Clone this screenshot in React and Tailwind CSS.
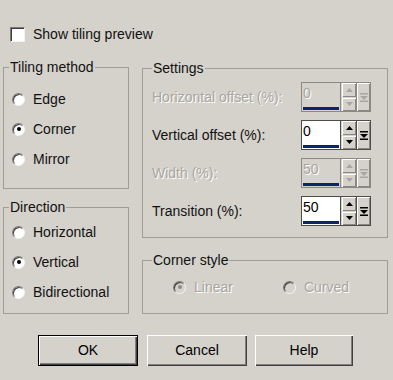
const dim = "text-[#a9a69f] [text-shadow:1px_1px_0_#ffffff]";

function Radio({ label, checked, disabled, className = "" }) {
  return (
    <div className={`flex h-[30px] items-center ${className}`}>
      <span
        className={`flex h-[13px] w-[13px] shrink-0 items-center justify-center rounded-full border border-t-[#7d7a74] border-l-[#7d7a74] border-r-[#f4f3f0] border-b-[#f4f3f0] shadow-[inset_1px_1px_0_#3f3d3a] ${
          disabled ? "bg-[#d5d2cb]" : "bg-white"
        }`}
      >
        {checked && (
          <span className={`h-[4px] w-[4px] rounded-full ${disabled ? "bg-[#8f8c86]" : "bg-black"}`} />
        )}
      </span>
      <span className={`ml-[8px] leading-none ${disabled ? dim : ""}`}>{label}</span>
    </div>
  );
}

function Group({ title, className, children }) {
  return (
    <fieldset className={`border border-[#a09d96] ${className}`}>
      <legend className="px-[1px] leading-[16px]">{title}</legend>
      {children}
    </fieldset>
  );
}

function Spin({ value, disabled }) {
  const frame = disabled ? "border-[#8c8983] bg-[#8c8983]" : "border-[#4e4c48] bg-[#4e4c48]";
  const arrow = disabled ? "#a9a69f" : "#000000";
  const btn =
    "flex items-center justify-center bg-[#d5d2cb] shadow-[inset_1px_1px_0_#ffffff,inset_-1px_-1px_0_#8a8780]";
  return (
    <div className={`flex h-[30px] w-[70px] gap-[1px] border ${frame}`}>
      <div className={`flex w-[38px] flex-col ${disabled ? "bg-[#d5d2cb]" : "bg-white"}`}>
        <span className={`flex-1 pl-[1px] pt-[1px] leading-[18px] ${disabled ? dim : "text-black"}`}>{value}</span>
        <span className="mx-[1px] mb-[1px] h-[3px] bg-[#0b2470]" />
      </div>
      <div className="flex w-[15px] flex-col gap-[1px] bg-[#d5d2cb] pl-[1px]">
        <span className={`${btn} flex-1`}>
          <svg width="7" height="4" viewBox="0 0 7 4">
            <path d="M3.5 0 L7 4 L0 4 Z" fill={arrow} />
          </svg>
        </span>
        <span className={`${btn} flex-1`}>
          <svg width="7" height="4" viewBox="0 0 7 4">
            <path d="M0 0 L7 0 L3.5 4 Z" fill={arrow} />
          </svg>
        </span>
      </div>
      <span className={`${btn} flex-1`}>
        <svg width="8" height="9" viewBox="0 0 8 9">
          <rect x="0" y="0" width="8" height="1.5" fill={arrow} />
          <path d="M0 3 L8 3 L4 7 Z" fill={arrow} />
          <rect x="0" y="7.5" width="8" height="1.5" fill={arrow} />
        </svg>
      </span>
    </div>
  );
}

function SettingRow({ label, value, disabled }) {
  return (
    <div className="flex h-[30px] items-center justify-between pr-[7px]">
      <span className={disabled ? dim : ""}>{label}</span>
      <Spin value={value} disabled={disabled} />
    </div>
  );
}

function Button({ children, primary, width }) {
  return (
    <button
      className={`h-[31px] bg-[#d5d2cb] text-[14px] text-black shadow-[inset_1px_1px_0_#ffffff,inset_-1px_-1px_0_#404040,inset_-2px_-2px_0_#808080] ${
        primary ? "border border-black" : ""
      } ${width}`}
    >
      {children}
    </button>
  );
}

export default function App() {
  return (
    <div className="h-[380px] w-[393px] overflow-hidden bg-[#d5d2cb] font-['Liberation_Sans',Arial,sans-serif] text-[14px] text-[#111]">
      <div className="mt-[24px] flex h-[20px] items-center pl-[10px]">
        <span className="h-[15px] w-[15px] border border-t-[#7d7a74] border-l-[#7d7a74] border-r-[#f4f3f0] border-b-[#f4f3f0] bg-white shadow-[inset_1px_1px_0_#3f3d3a]" />
        <span className="ml-[8px]">Show tiling preview</span>
      </div>

      <div className="mt-[15px] flex gap-[13px] pl-[3px]">
        <div className="flex w-[126px] flex-col gap-[10px]">
          <Group title="Tiling method" className="h-[130px] px-[5px]">
            <div className="pl-[3px] pt-[9px]">
              <Radio label="Edge" />
              <Radio label="Corner" checked />
              <Radio label="Mirror" />
            </div>
          </Group>
          <Group title="Direction" className="h-[115px] px-[5px]">
            <div className="pl-[3px] pt-[2px]">
              <Radio label="Horizontal" />
              <Radio label="Vertical" checked />
              <Radio label="Bidirectional" />
            </div>
          </Group>
        </div>

        <div className="mt-[1px] flex w-[246px] flex-col gap-[14px]">
          <Group title="Settings" className="h-[178px] px-[9px]">
            <div className="flex flex-col gap-[8px] pt-[6px]">
              <SettingRow label="Horizontal offset (%):" value="0" disabled />
              <SettingRow label="Vertical offset (%):" value="0" />
              <SettingRow label="Width (%):" value="50" disabled />
              <SettingRow label="Transition (%):" value="50" />
            </div>
          </Group>
          <Group title="Corner style" className="h-[62px] px-[9px]">
            <div className="flex pl-[21px] pt-[4px]">
              <Radio label="Linear" checked disabled className="w-[110px]" />
              <Radio label="Curved" disabled />
            </div>
          </Group>
        </div>
      </div>

      <div className="mt-[21px] flex pl-[38px]">
        <Button primary width="w-[100px]">OK</Button>
        <Button width="ml-[9px] w-[100px]">Cancel</Button>
        <Button width="ml-[8px] w-[98px]">Help</Button>
      </div>
    </div>
  );
}
